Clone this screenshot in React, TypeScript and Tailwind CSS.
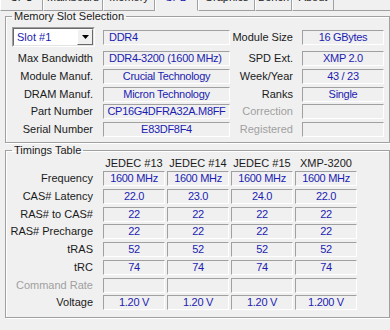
import React from 'react';

const tabs = [
  { name: 'CPU', w: 'w-[43px]' },
  { name: 'Mainboard', w: 'w-[60px]' },
  { name: 'Memory', w: 'w-[52px]' },
  { name: 'SPD', w: 'w-[43px]', active: true },
  { name: 'Graphics', w: 'w-[57px]' },
  { name: 'Bench', w: 'w-[37px]' },
  { name: 'About', w: 'w-[42px]' },
];

const slotRows = [
  { label: 'Max Bandwidth', value: 'DDR4-3200 (1600 MHz)', left: true, rLabel: 'SPD Ext.', rValue: 'XMP 2.0' },
  { label: 'Module Manuf.', value: 'Crucial Technology', rLabel: 'Week/Year', rValue: '43 / 23' },
  { label: 'DRAM Manuf.', value: 'Micron Technology', rLabel: 'Ranks', rValue: 'Single' },
  { label: 'Part Number', value: 'CP16G4DFRA32A.M8FF', rLabel: 'Correction', rValue: '', rOff: true },
  { label: 'Serial Number', value: 'E83DF8F4', rLabel: 'Registered', rValue: '', rOff: true },
];

const timings = [
  { label: 'Frequency', v: ['1600 MHz', '1600 MHz', '1600 MHz', '1600 MHz'] },
  { label: 'CAS# Latency', v: ['22.0', '23.0', '24.0', '22.0'] },
  { label: 'RAS# to CAS#', v: ['22', '22', '22', '22'] },
  { label: 'RAS# Precharge', v: ['22', '22', '22', '22'] },
  { label: 'tRAS', v: ['52', '52', '52', '52'] },
  { label: 'tRC', v: ['74', '74', '74', '74'] },
  { label: 'Command Rate', v: ['', '', '', ''], off: true },
  { label: 'Voltage', v: ['1.20 V', '1.20 V', '1.20 V', '1.200 V'] },
];

const Field: React.FC<{ w: string; children?: React.ReactNode; left?: boolean }> = ({ w, children, left }) => (
  <div
    className={`${w} h-[15px] shrink-0 border border-t-[#a0a0a0] border-l-[#a0a0a0] border-b-white border-r-white flex items-center ${
      left ? 'justify-start pl-[5px]' : 'justify-center'
    } text-[#1c1cb0] tracking-[-0.3px] whitespace-nowrap overflow-hidden`}
  >
    {children}
  </div>
);

const Label: React.FC<{ w: string; off?: boolean; children: React.ReactNode }> = ({ w, off, children }) => (
  <div className={`${w} shrink-0 text-right whitespace-nowrap ${off ? 'text-[#a0a0a0]' : 'text-[#1a1a1a]'}`}>{children}</div>
);

export default function App() {
  return (
    <div className="w-[390px] h-[330px] overflow-hidden bg-[#f0f0f0] font-['Liberation_Sans',Arial,sans-serif] text-[11px] leading-[13px] text-[#1a1a1a]">
      {/* tab strip, top cut off by the crop */}
      <div className="flex items-end h-[11px] overflow-hidden">
        {tabs.map((t) => (
          <div
            key={t.name}
            className={`${t.w} shrink-0 h-[20px] text-center border-l border-l-white border-r border-r-[#a0a0a0] ${
              t.active ? 'text-[#1c1cb0] border-b border-b-transparent' : 'border-b border-b-[#a0a0a0]'
            }`}
          >
            {t.name}
          </div>
        ))}
        <div className="flex-1 h-full border-b border-b-[#a0a0a0]" />
      </div>

      {/* Memory Slot Selection */}
      <fieldset className="ml-[5px] w-[385px] mt-[-1px] border border-[#a0a0a0] shadow-[inset_1px_1px_0_#fff,1px_1px_0_#fff] pb-[5px]">
        <legend className="ml-[6px] px-[2px] text-[#1a1a1a]">Memory Slot Selection</legend>
        <div className="flex items-center mt-[4px]">
          <div className="ml-[6px] w-[83px] h-[20px] border border-t-[#a0a0a0] border-l-[#a0a0a0] border-b-white border-r-white">
            <div className="h-full border border-t-[#696969] border-l-[#696969] border-b-[#e3e3e3] border-r-[#e3e3e3] bg-white flex items-center">
              <span className="pl-[3px] flex-1 text-[#1c1cb0]">Slot #1</span>
              <div className="w-[16px] h-[16px] bg-[#f0f0f0] border border-t-white border-l-white border-b-[#696969] border-r-[#696969] flex items-center justify-center">
                <svg width="7" height="4" viewBox="0 0 7 4">
                  <path d="M0 0h7L3.5 4z" fill="#000" />
                </svg>
              </div>
            </div>
          </div>
          <div className="ml-[8px]">
            <Field w="w-[127px]" left>
              DDR4
            </Field>
          </div>
          <Label w="w-[63px]">Module Size</Label>
          <div className="ml-[9px]">
            <Field w="w-[82px]">16 GBytes</Field>
          </div>
        </div>
        <div className="flex flex-col gap-[2.75px] mt-[4px]">
          {slotRows.map((r) => (
            <div key={r.label} className="flex items-center">
              <Label w="w-[87px]">{r.label}</Label>
              <div className="ml-[10px]">
                <Field w="w-[127px]" left={r.left}>
                  {r.value}
                </Field>
              </div>
              <Label w="w-[63px]" off={r.rOff}>
                {r.rLabel}
              </Label>
              <div className="ml-[9px]">
                <Field w="w-[82px]">{r.rValue}</Field>
              </div>
            </div>
          ))}
        </div>
      </fieldset>

      {/* Timings Table */}
      <fieldset className="ml-[5px] w-[385px] mt-[1px] border border-[#a0a0a0] shadow-[inset_1px_1px_0_#fff,1px_1px_0_#fff] pb-[7px]">
        <legend className="ml-[6px] px-[2px] text-[#1a1a1a]">Timings Table</legend>
        <div className="flex ml-[97px] gap-[2px]">
          {['JEDEC #13', 'JEDEC #14', 'JEDEC #15', 'XMP-3200'].map((h) => (
            <div key={h} className="w-[62px] text-center whitespace-nowrap">
              {h}
            </div>
          ))}
        </div>
        <div className="flex flex-col gap-[2.75px] mt-[1px]">
          {timings.map((r) => (
            <div key={r.label} className="flex items-center">
              <Label w="w-[87px]" off={r.off}>
                {r.label}
              </Label>
              <div className="ml-[10px] flex gap-[2px]">
                {r.v.map((v, i) => (
                  <Field key={i} w="w-[62px]">
                    {v}
                  </Field>
                ))}
              </div>
            </div>
          ))}
        </div>
      </fieldset>
    </div>
  );
}
